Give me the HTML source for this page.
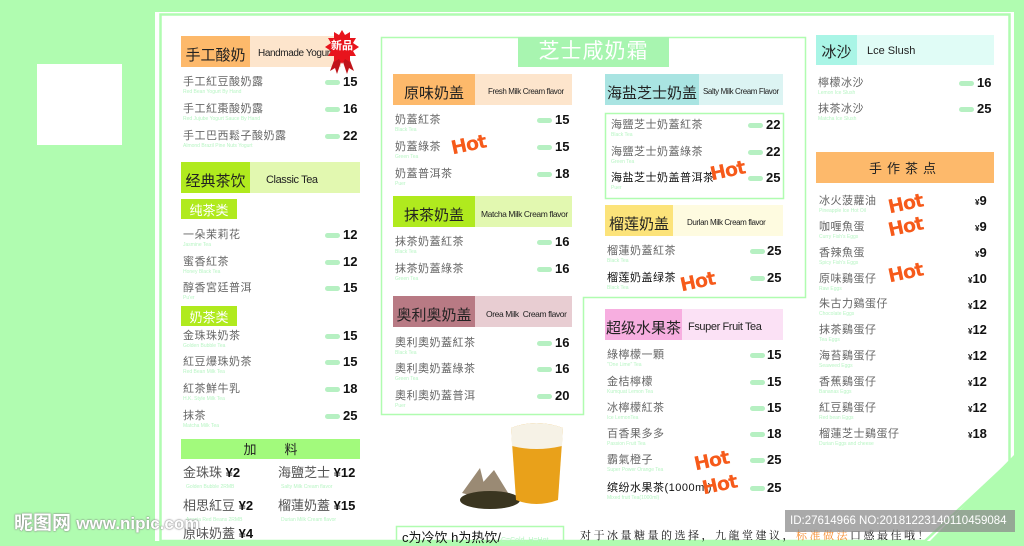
<!DOCTYPE html>
<html><head><meta charset="utf-8">
<style>
*{margin:0;padding:0;box-sizing:border-box}
body{width:1024px;height:541px;overflow:hidden;background:#b0fcb0;position:relative;font-family:"Liberation Sans","Noto Sans CJK SC",sans-serif}
.a{position:absolute;white-space:nowrap}
.h{position:absolute;height:31px;display:flex;white-space:nowrap}
.h .l{display:flex;align-items:center;justify-content:center;font-size:15px;color:#222;padding-top:6px;white-space:nowrap}
.h .r{flex:1;display:flex;align-items:center;padding-left:10px;font-size:10.5px;color:#222;padding-top:4px;white-space:nowrap;overflow:hidden;letter-spacing:-.4px}
.it{position:absolute;font-size:11px;color:#666;white-space:nowrap;line-height:13px;letter-spacing:.5px}
.it i{display:block;font-style:normal;font-size:5px;color:#b8f5c4;line-height:7px;letter-spacing:0}
.it.b{color:#111}
.pr{position:absolute;font-size:13px;color:#111;font-weight:bold;line-height:14px}
.pl{position:absolute;width:15px;height:5px;border-radius:3px;background:#b6f0c2}
.hot{position:absolute;color:#f65a1a;font-weight:bold;font-size:19px;font-family:"DejaVu Sans",sans-serif;transform:rotate(-12deg);letter-spacing:-1px}
.sub{position:absolute;background:#b0ea1e;color:#fff;font-size:13px;height:20px;width:56px;display:flex;align-items:center;justify-content:center}
.ad{position:absolute;font-size:13px;color:#555;white-space:nowrap;line-height:15px}
.ad b{color:#111;font-weight:bold}
.ad i{display:block;font-style:normal;font-size:5px;color:#b8f5c4;padding-left:3px}
</style></head><body>
<div class="a" style="left:37px;top:64px;width:85px;height:81px;background:#fff"></div>
<svg class="a" style="left:0;top:0" width="1024" height="541">
<polygon points="155,12 1014,12 1014,455 930,541 155,541" fill="#fff"/>
<polygon points="160.5,14.5 1009.5,14.5 1009.5,462 925,541 160.5,541" fill="none" stroke="#b0fcb0" stroke-width="2.5"/>
<path d="M381.5,37.5H805.5V297.5H583.5V414.5H381.5Z" fill="none" stroke="#b0fcb0" stroke-width="1.5"/>
<rect x="605.5" y="113.5" width="178" height="85" fill="none" stroke="#b0fcb0" stroke-width="1.5"/>
<rect x="396.5" y="526.5" width="167" height="20" fill="none" stroke="#b0fcb0" stroke-width="1.5"/>
<path d="M462,493 L480,468 L488,500Z M478,488 L494,470 L510,496 L490,498Z" fill="#9a8a74"/>
<ellipse cx="490" cy="500" rx="30" ry="9" fill="#3a3520"/>
<path d="M511,428 Q536,418 563,428 L558,500 Q536,508 516,500Z" fill="#e9a11a"/>
<path d="M511,428 Q536,418 563,428 L562,446 Q536,452 512,446Z" fill="#f6f2e6"/>
</svg>

<!-- left column -->
<div class="h" style="left:181px;top:36px;width:160px"><div class="l" style="width:69px;background:#fdb96b">手工酸奶</div><div class="r" style="background:#fde5cc;font-size:10px;padding-left:8px">Handmade Yogurt</div></div>
<svg class="a" style="left:322px;top:28px" width="40" height="46">
<g transform="translate(20,19)">
<path d="M-6,8 L-12,24 L-7,21 L-5,27 L0,12Z M6,8 L12,24 L7,21 L5,27 L0,12Z" fill="#c0141a"/>
<polygon fill="#e8141c" points="0,-17 3,-12 8,-15 8,-9 14,-9 11,-4 17,0 11,4 14,9 8,9 8,15 3,12 0,17 -3,12 -8,15 -8,9 -14,9 -11,4 -17,0 -11,-4 -14,-9 -8,-9 -8,-15 -3,-12"/>
</g></svg>
<div class="a" style="left:331px;top:40px;font-size:11px;color:#fff;font-weight:bold;line-height:13px">新品</div>
<div class="it" style="left:183px;top:76px">手工紅豆酸奶露<i>Red Bean Yogurt By Hand</i></div>
<div class="it" style="left:183px;top:103px">手工紅棗酸奶露<i>Red Jujube Yogurt Sauce By Hand</i></div>
<div class="it" style="left:183px;top:130px">手工巴西鬆子酸奶露<i>Almond Brazil Pine Nuts Yogurt</i></div>
<div class="pl" style="left:325px;top:80px"></div><div class="pr" style="left:343px;top:75px">15</div>
<div class="pl" style="left:325px;top:107px"></div><div class="pr" style="left:343px;top:102px">16</div>
<div class="pl" style="left:325px;top:134px"></div><div class="pr" style="left:343px;top:129px">22</div>

<div class="h" style="left:181px;top:162px;width:179px"><div class="l" style="width:69px;background:#b0ea1e">经典茶饮</div><div class="r" style="background:#e2f8b0;padding-left:16px;font-size:11px">Classic Tea</div></div>
<div class="sub" style="left:181px;top:199px">纯茶类</div>
<div class="it" style="left:183px;top:229px">一朵茉莉花<i>Jasmine Tea</i></div>
<div class="it" style="left:183px;top:256px">蜜香紅茶<i>Honey Black Tea</i></div>
<div class="it" style="left:183px;top:282px">醇香宮廷普洱<i>Pu'er</i></div>
<div class="pl" style="left:325px;top:233px"></div><div class="pr" style="left:343px;top:228px">12</div>
<div class="pl" style="left:325px;top:260px"></div><div class="pr" style="left:343px;top:255px">12</div>
<div class="pl" style="left:325px;top:286px"></div><div class="pr" style="left:343px;top:281px">15</div>
<div class="sub" style="left:181px;top:306px">奶茶类</div>
<div class="it" style="left:183px;top:330px">金珠珠奶茶<i>Golden Bubble Tea</i></div>
<div class="it" style="left:183px;top:356px">紅豆爆珠奶茶<i>Red Bean Milk Tea</i></div>
<div class="it" style="left:183px;top:383px">紅茶鮮牛乳<i>H.K. Style Milk Tea</i></div>
<div class="it" style="left:183px;top:410px">抹茶<i>Matcha Milk Tea</i></div>
<div class="pl" style="left:325px;top:334px"></div><div class="pr" style="left:343px;top:329px">15</div>
<div class="pl" style="left:325px;top:360px"></div><div class="pr" style="left:343px;top:355px">15</div>
<div class="pl" style="left:325px;top:387px"></div><div class="pr" style="left:343px;top:382px">18</div>
<div class="pl" style="left:325px;top:414px"></div><div class="pr" style="left:343px;top:409px">25</div>
<div class="a" style="left:181px;top:439px;width:179px;height:20px;background:#a2fa7c;font-size:13px;color:#222;text-align:center;line-height:22px;letter-spacing:28px;padding-left:28px">加料</div>
<div class="ad" style="left:183px;top:465px">金珠珠 <b>¥2</b><i>Golden Bubble 2RMB</i></div>
<div class="ad" style="left:278px;top:465px">海鹽芝士 <b>¥12</b><i>Salty Milk Cream flavor</i></div>
<div class="ad" style="left:183px;top:498px">相思紅豆 <b>¥2</b><i>Acacia Red Beans 2RMB</i></div>
<div class="ad" style="left:278px;top:498px">榴蓮奶蓋 <b>¥15</b><i>Durian Milk Cream flavor</i></div>
<div class="ad" style="left:183px;top:526px">原味奶蓋 <b>¥4</b></div>

<!-- middle -->
<div class="a" style="left:518px;top:37px;width:151px;height:30px;background:#a8f5b0;color:#fff;font-size:21px;text-align:center;line-height:30px;letter-spacing:1px">芝士咸奶霜</div>
<div class="h" style="left:393px;top:74px;width:179px"><div class="l" style="width:82px;background:#fdb96b">原味奶盖</div><div class="r" style="background:#fde5cc;font-size:8px;padding-left:13px">Fresh Milk Cream flavor</div></div>
<div class="it" style="left:395px;top:114px">奶蓋紅茶<i>Black Tea</i></div>
<div class="it" style="left:395px;top:141px">奶蓋綠茶<i>Green Tea</i></div>
<div class="it" style="left:395px;top:168px">奶蓋普洱茶<i>Puer</i></div>
<div class="pl" style="left:537px;top:118px"></div><div class="pr" style="left:555px;top:113px">15</div>
<div class="pl" style="left:537px;top:145px"></div><div class="pr" style="left:555px;top:140px">15</div>
<div class="pl" style="left:537px;top:172px"></div><div class="pr" style="left:555px;top:167px">18</div>
<div class="hot" style="left:451px;top:134px">Hot</div>
<div class="h" style="left:393px;top:196px;width:179px"><div class="l" style="width:82px;background:#b0ea1e">抹茶奶盖</div><div class="r" style="background:#e2f8b0;font-size:8.5px;padding-left:6px">Matcha Milk Cream flavor</div></div>
<div class="it" style="left:395px;top:236px">抹茶奶蓋紅茶<i>Black Tea</i></div>
<div class="it" style="left:395px;top:263px">抹茶奶蓋綠茶<i>Green Tea</i></div>
<div class="pl" style="left:537px;top:240px"></div><div class="pr" style="left:555px;top:235px">16</div>
<div class="pl" style="left:537px;top:267px"></div><div class="pr" style="left:555px;top:262px">16</div>
<div class="h" style="left:393px;top:296px;width:179px"><div class="l" style="width:82px;background:#b87a84">奥利奥奶盖</div><div class="r" style="background:#e8cdd2;font-size:8.5px;padding-left:11px">Orea Milk &nbsp;Cream flavor</div></div>
<div class="it" style="left:395px;top:337px">奧利奧奶蓋紅茶<i>Black Tea</i></div>
<div class="it" style="left:395px;top:363px">奧利奧奶蓋綠茶<i>Green Tea</i></div>
<div class="it" style="left:395px;top:390px">奧利奧奶蓋普洱<i>Puer</i></div>
<div class="pl" style="left:537px;top:341px"></div><div class="pr" style="left:555px;top:336px">16</div>
<div class="pl" style="left:537px;top:367px"></div><div class="pr" style="left:555px;top:362px">16</div>
<div class="pl" style="left:537px;top:394px"></div><div class="pr" style="left:555px;top:389px">20</div>
<div class="a" style="left:402px;top:527px;font-size:13px;color:#111">c为冷饮 h为热饮/<span style="font-size:7px;color:#b8f5c4">C=Cold, H=Hot</span></div>

<div class="h" style="left:605px;top:74px;width:178px"><div class="l" style="width:94px;background:#a9e4e2">海盐芝士奶盖</div><div class="r" style="background:#dcf4f3;font-size:8px;padding-left:4px">Salty Milk Cream Flavor</div></div>
<div class="it" style="left:611px;top:119px">海鹽芝士奶蓋紅茶<i>Black Tea</i></div>
<div class="it" style="left:611px;top:146px">海鹽芝士奶蓋綠茶<i>Green Tea</i></div>
<div class="it b" style="left:611px;top:172px">海盐芝士奶盖普洱茶<i>Puer</i></div>
<div class="pl" style="left:748px;top:123px"></div><div class="pr" style="left:766px;top:118px">22</div>
<div class="pl" style="left:748px;top:150px"></div><div class="pr" style="left:766px;top:145px">22</div>
<div class="pl" style="left:748px;top:176px"></div><div class="pr" style="left:766px;top:171px">25</div>
<div class="hot" style="left:710px;top:160px">Hot</div>
<div class="h" style="left:605px;top:205px;width:178px"><div class="l" style="width:68px;background:#fce37a">榴莲奶盖</div><div class="r" style="background:#fefbe0;font-size:8px;padding-left:14px">Durlan Milk Cream flavor</div></div>
<div class="it" style="left:607px;top:245px">榴蓮奶蓋紅茶<i>Black Tea</i></div>
<div class="it b" style="left:607px;top:272px">榴莲奶盖绿茶<i>Black Tea</i></div>
<div class="pl" style="left:750px;top:249px"></div><div class="pr" style="left:767px;top:244px">25</div>
<div class="pl" style="left:750px;top:276px"></div><div class="pr" style="left:767px;top:271px">25</div>
<div class="hot" style="left:680px;top:271px">Hot</div>
<div class="h" style="left:605px;top:309px;width:178px"><div class="l" style="width:77px;background:#f7aee0">超级水果茶</div><div class="r" style="background:#fbe1f5;font-size:11px;padding-left:6px">Fsuper Fruit Tea</div></div>
<div class="it" style="left:607px;top:349px">綠檸檬一顆<i>"One Lime" Tea</i></div>
<div class="it" style="left:607px;top:376px">金桔檸檬<i>Kumquat Lemon Tea</i></div>
<div class="it" style="left:607px;top:402px">冰檸檬紅茶<i>Ice LemonTea</i></div>
<div class="it" style="left:607px;top:428px">百香果多多<i>Passion Fruit Tea</i></div>
<div class="it" style="left:607px;top:454px">霸氣橙子<i>Super Power Orange Tea</i></div>
<div class="it b" style="left:607px;top:482px">缤纷水果茶(1000ml)<i>Mixed fruit Tea(1000ml)</i></div>
<div class="pl" style="left:750px;top:353px"></div><div class="pr" style="left:767px;top:348px">15</div>
<div class="pl" style="left:750px;top:380px"></div><div class="pr" style="left:767px;top:375px">15</div>
<div class="pl" style="left:750px;top:406px"></div><div class="pr" style="left:767px;top:401px">15</div>
<div class="pl" style="left:750px;top:432px"></div><div class="pr" style="left:767px;top:427px">18</div>
<div class="pl" style="left:750px;top:458px"></div><div class="pr" style="left:767px;top:453px">25</div>
<div class="pl" style="left:750px;top:486px"></div><div class="pr" style="left:767px;top:481px">25</div>
<div class="hot" style="left:694px;top:450px">Hot</div>
<div class="hot" style="left:702px;top:474px">Hot</div>
<div class="a" style="left:580px;top:527px;font-size:11px;color:#111;font-family:'Liberation Serif','Noto Serif CJK SC',serif;letter-spacing:2.5px">对于冰量糖量的选择，九龍堂建议，<span style="color:#f68a2a">标准做法</span>口感最佳哦！</div>

<!-- right -->
<div class="h" style="left:816px;top:35px;width:178px;height:30px"><div class="l" style="width:41px;background:#a9f5e6;padding-top:2px">冰沙</div><div class="r" style="background:#e0fcf6;padding-top:2px;font-size:11px;letter-spacing:0">Lce Slush</div></div>
<div class="it" style="left:818px;top:77px">檸檬冰沙<i>Lemon Ice Slush</i></div>
<div class="it" style="left:818px;top:103px">抹茶冰沙<i>Matcha Ice Slush</i></div>
<div class="pl" style="left:959px;top:81px"></div><div class="pr" style="left:977px;top:76px">16</div>
<div class="pl" style="left:959px;top:107px"></div><div class="pr" style="left:977px;top:102px">25</div>
<div class="a" style="left:816px;top:152px;width:178px;height:31px;background:#fdb96b;font-size:13px;color:#222;text-align:center;line-height:33px;letter-spacing:5px">手作茶点</div>
<div class="it" style="left:819px;top:195px">冰火菠蘿油<i>Pineapple Ice Hot Oil</i></div>
<div class="it" style="left:819px;top:221px">咖喱魚蛋<i>Curry Fish's Eggs</i></div>
<div class="it" style="left:819px;top:247px">香辣魚蛋<i>Spicy Fish's Eggs</i></div>
<div class="it" style="left:819px;top:273px">原味鷄蛋仔<i>Raw Eggs</i></div>
<div class="it" style="left:819px;top:298px">朱古力鷄蛋仔<i>Chocolate Eggs</i></div>
<div class="it" style="left:819px;top:324px">抹茶鷄蛋仔<i>Tea Eggs</i></div>
<div class="it" style="left:819px;top:350px">海苔鷄蛋仔<i>Seaweed Eggs</i></div>
<div class="it" style="left:819px;top:376px">香蕉鷄蛋仔<i>Bananas Eggs</i></div>
<div class="it" style="left:819px;top:402px">紅豆鷄蛋仔<i>Red bean Eggs</i></div>
<div class="it" style="left:819px;top:428px">榴蓮芝士鷄蛋仔<i>Durian Eggs and cheese</i></div>
<div class="pr" style="left:975px;top:194px"><small style="font-size:8px">¥</small>9</div>
<div class="pr" style="left:975px;top:220px"><small style="font-size:8px">¥</small>9</div>
<div class="pr" style="left:975px;top:246px"><small style="font-size:8px">¥</small>9</div>
<div class="pr" style="left:968px;top:272px"><small style="font-size:8px">¥</small>10</div>
<div class="pr" style="left:968px;top:298px"><small style="font-size:8px">¥</small>12</div>
<div class="pr" style="left:968px;top:323px"><small style="font-size:8px">¥</small>12</div>
<div class="pr" style="left:968px;top:349px"><small style="font-size:8px">¥</small>12</div>
<div class="pr" style="left:968px;top:375px"><small style="font-size:8px">¥</small>12</div>
<div class="pr" style="left:968px;top:401px"><small style="font-size:8px">¥</small>12</div>
<div class="pr" style="left:968px;top:427px"><small style="font-size:8px">¥</small>18</div>
<div class="hot" style="left:888px;top:193px">Hot</div>
<div class="hot" style="left:888px;top:216px">Hot</div>
<div class="hot" style="left:888px;top:262px">Hot</div>

<!-- watermarks -->
<div class="a" style="left:785px;top:510px;width:230px;height:22px;background:rgba(140,140,140,.75);color:#fff;font-size:11.5px;line-height:22px;padding-left:5px">ID:27614966 NO:20181223140110459084</div>
<div class="a" style="left:14px;top:508px;font-size:19px;font-weight:bold;color:#fff;text-shadow:0 0 2px #888,0 0 1px #666">昵图网 <span style="font-size:17px">www.nipic.com</span></div>
</body></html>
